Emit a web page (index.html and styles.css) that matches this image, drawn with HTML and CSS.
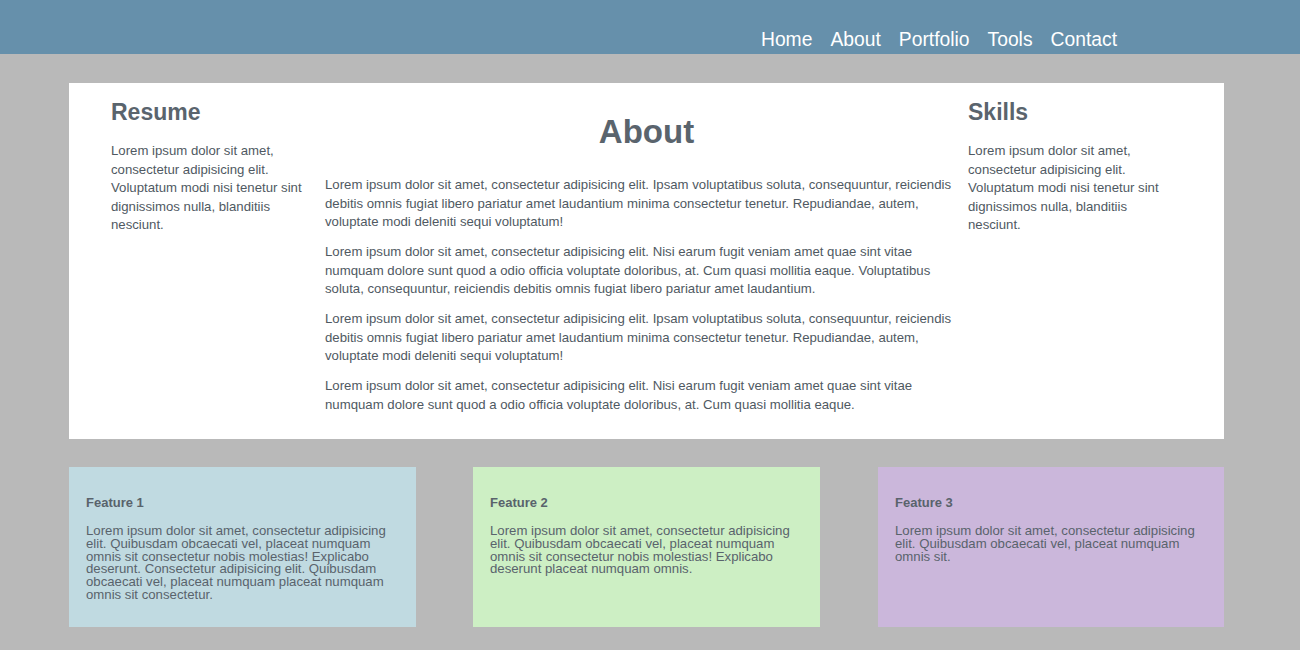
FILE: index.html
```html
<!DOCTYPE html>
<html lang="en">
<head>
<meta charset="utf-8">
<title>About</title>
<link rel="stylesheet" href="styles.css">
</head>
<body>
<header class="site-header">
  <nav class="nav">
    <a href="#">Home</a>
    <a href="#">About</a>
    <a href="#">Portfolio</a>
    <a href="#">Tools</a>
    <a href="#">Contact</a>
  </nav>
</header>
<main class="page">
  <section class="main-box">
    <aside class="side">
      <h2 class="side-title">Resume</h2>
      <p class="side-text">Lorem ipsum dolor sit amet, consectetur adipisicing elit. Voluptatum modi nisi tenetur sint dignissimos nulla, blanditiis nesciunt.</p>
    </aside>
    <article class="center">
      <h1 class="center-title">About</h1>
      <p class="center-text">Lorem ipsum dolor sit amet, consectetur adipisicing elit. Ipsam voluptatibus soluta, consequuntur, reiciendis debitis omnis fugiat libero pariatur amet laudantium minima consectetur tenetur. Repudiandae, autem, voluptate modi deleniti sequi voluptatum!</p>
      <p class="center-text">Lorem ipsum dolor sit amet, consectetur adipisicing elit. Nisi earum fugit veniam amet quae sint vitae numquam dolore sunt quod a odio officia voluptate doloribus, at. Cum quasi mollitia eaque. Voluptatibus soluta, consequuntur, reiciendis debitis omnis fugiat libero pariatur amet laudantium.</p>
      <p class="center-text">Lorem ipsum dolor sit amet, consectetur adipisicing elit. Ipsam voluptatibus soluta, consequuntur, reiciendis debitis omnis fugiat libero pariatur amet laudantium minima consectetur tenetur. Repudiandae, autem, voluptate modi deleniti sequi voluptatum!</p>
      <p class="center-text">Lorem ipsum dolor sit amet, consectetur adipisicing elit. Nisi earum fugit veniam amet quae sint vitae numquam dolore sunt quod a odio officia voluptate doloribus, at. Cum quasi mollitia eaque.</p>
    </article>
    <aside class="side">
      <h2 class="side-title">Skills</h2>
      <p class="side-text">Lorem ipsum dolor sit amet, consectetur adipisicing elit. Voluptatum modi nisi tenetur sint dignissimos nulla, blanditiis nesciunt.</p>
    </aside>
  </section>
  <section class="features">
    <div class="feature feature-blue">
      <h3 class="feature-title">Feature 1</h3>
      <p class="feature-text">Lorem ipsum dolor sit amet, consectetur adipisicing elit. Quibusdam obcaecati vel, placeat numquam omnis sit consectetur nobis molestias! Explicabo deserunt. Consectetur adipisicing elit. Quibusdam obcaecati vel, placeat numquam placeat numquam omnis sit consectetur.</p>
    </div>
    <div class="feature feature-green">
      <h3 class="feature-title">Feature 2</h3>
      <p class="feature-text">Lorem ipsum dolor sit amet, consectetur adipisicing elit. Quibusdam obcaecati vel, placeat numquam omnis sit consectetur nobis molestias! Explicabo deserunt placeat numquam omnis.</p>
    </div>
    <div class="feature feature-purple">
      <h3 class="feature-title">Feature 3</h3>
      <p class="feature-text">Lorem ipsum dolor sit amet, consectetur adipisicing elit. Quibusdam obcaecati vel, placeat numquam omnis sit.</p>
    </div>
  </section>
</main>
</body>
</html>
```

FILE: styles.css
```css
* {
  box-sizing: border-box;
}

html, body {
  margin: 0;
  padding: 0;
}

body {
  background: #b9b9b9;
  font-family: "Liberation Sans", Arial, Helvetica, sans-serif;
  color: #4f5962;
  min-height: 650px;
}

.site-header {
  background: #6690ab;
  height: 54px;
  display: flex;
  justify-content: flex-end;
  align-items: flex-end;
  padding-right: 183px;
  padding-bottom: 3px;
}

.nav {
  display: flex;
  gap: 18px;
}

.nav a {
  color: #ffffff;
  text-decoration: none;
  font-size: 19.3px;
  line-height: 22px;
}

.page {
  padding: 29px 76px 0 69px;
}

.main-box {
  background: #ffffff;
  display: grid;
  grid-template-columns: 214px 1fr 214px;
  padding: 0 42px 25px 42px;
}

.side-title {
  margin: 17px 0 0 0;
  font-size: 23px;
  line-height: 25px;
  font-weight: bold;
  color: #5a646d;
}

.side-text {
  margin: 17px 0 0 0;
  font-size: 13.2px;
  line-height: 18.5px;
  padding-right: 12px;
}

.center-title {
  margin: 31px 0 0 0;
  text-align: center;
  font-size: 33px;
  line-height: 36px;
  font-weight: bold;
  color: #5a646d;
}

.center-text {
  margin: 11.5px 14px 0 0;
  font-size: 13.2px;
  line-height: 18.5px;
}

.center-title + .center-text {
  margin-top: 26px;
}

.features {
  margin-top: 28px;
  display: grid;
  grid-template-columns: 347px 347px 347px;
  column-gap: 57px;
  width: 1155px;
}

.feature {
  height: 160px;
  padding: 29px 17px 0 17px;
  color: #59636c;
}

.feature-blue {
  background: #c0dae1;
}

.feature-green {
  background: #cdefc4;
}

.feature-purple {
  background: #cbb7db;
  width: 346px;
  justify-self: end;
}

.feature-title {
  margin: 0;
  font-size: 13px;
  line-height: 13px;
  font-weight: bold;
}

.feature-text {
  margin: 16px 0 0 0;
  font-size: 13.2px;
  line-height: 12.8px;
  padding-right: 8px;
}
```
